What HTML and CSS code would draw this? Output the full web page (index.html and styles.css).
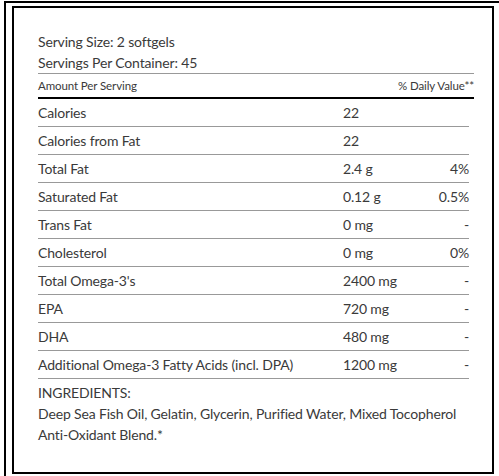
FILE: index.html
```html
<!DOCTYPE html>
<html lang="en">
<head>
  <meta charset="UTF-8" />
  <title>Supplement Facts</title>
  <link rel="stylesheet" href="styles.css">
</head>
<body>
  <div class="frame">
    <div class="facts">
      <div class="serving">
        <div>Serving Size: 2 softgels</div>
        <div>Servings Per Container: 45</div>
      </div>
      <div class="head-row">
        <span>Amount Per Serving</span>
        <span>% Daily Value**</span>
      </div>
      <table class="rows">
        <tr><td class="name">Calories</td><td class="amount">22</td><td class="dv"></td></tr>
        <tr><td class="name">Calories from Fat</td><td class="amount">22</td><td class="dv"></td></tr>
        <tr><td class="name">Total Fat</td><td class="amount">2.4 g</td><td class="dv">4%</td></tr>
        <tr><td class="name">Saturated Fat</td><td class="amount">0.12 g</td><td class="dv">0.5%</td></tr>
        <tr><td class="name">Trans Fat</td><td class="amount">0 mg</td><td class="dv">-</td></tr>
        <tr><td class="name">Cholesterol</td><td class="amount">0 mg</td><td class="dv">0%</td></tr>
        <tr><td class="name">Total Omega-3's</td><td class="amount">2400 mg</td><td class="dv">-</td></tr>
        <tr><td class="name">EPA</td><td class="amount">720 mg</td><td class="dv">-</td></tr>
        <tr><td class="name">DHA</td><td class="amount">480 mg</td><td class="dv">-</td></tr>
        <tr><td class="name">Additional Omega-3 Fatty Acids (incl. DPA)</td><td class="amount">1200 mg</td><td class="dv">-</td></tr>
      </table>
      <div class="ingredients">
        <div>INGREDIENTS:</div>
        <div>Deep Sea Fish Oil, Gelatin, Glycerin, Purified Water, Mixed Tocopherol Anti-Oxidant Blend.*</div>
      </div>
    </div>
  </div>
</body>
</html>
```

FILE: styles.css
```css
body {
  margin: 0;
  overflow: hidden;
  font-family: Lato, "Liberation Sans", sans-serif;
  color: #3a3a3a;
  background-color: #fff;
}
.frame {
  margin: 1px 0 0 4px;
  width: 489px;
  border-top: 2px solid #000;
  border-left: 2px solid #000;
  padding: 3px 0 6px 6px;
}
.facts {
  width: 436px;
  height: 441px;
  border: 2px solid #000;
  padding: 23px 18px 0 24px;
}
.serving {
  font-size: 14px;
  letter-spacing: -0.15px;
  line-height: 21px;
  border-bottom: 1px solid #999;
}
.head-row {
  display: flex;
  justify-content: space-between;
  height: 23px;
  align-items: center;
  font-size: 11.5px;
  letter-spacing: -0.1px;
  border-bottom: 2px solid #000;
}
.rows {
  width: 431px;
  border-collapse: collapse;
  font-size: 14px;
  letter-spacing: -0.15px;
}
.rows td {
  height: 27px;
  padding: 0;
  border-bottom: 1px solid #999;
}
.amount {
  width: 86px;
}
.dv {
  width: 40px;
  text-align: right;
}
.ingredients {
  margin-top: 3px;
  font-size: 14px;
  letter-spacing: -0.15px;
  line-height: 21px;
}
```
